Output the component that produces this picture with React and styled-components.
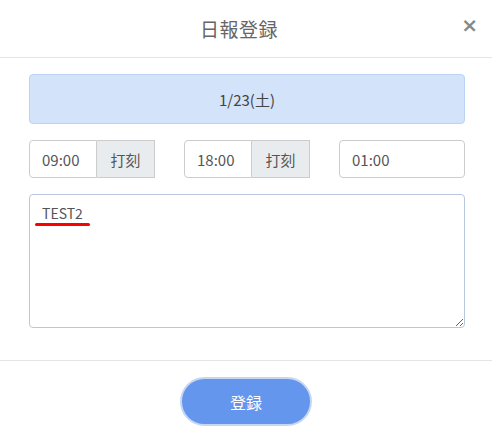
import React from "react";
import styled, { createGlobalStyle } from "styled-components";

const GlobalStyle = createGlobalStyle`
  html, body {
    margin: 0;
    padding: 0;
    background: #fff;
    font-family: "Noto Sans CJK JP", "Open Sans", sans-serif;
    color: #555;
  }
`;

const Modal = styled.div`
  width: 492px;
  height: 439px;
  display: flex;
  flex-direction: column;
  background: #fff;
`;

const Header = styled.header`
  height: 57px;
  border-bottom: 1px solid #e5e5e5;
  display: flex;
  align-items: center;
  justify-content: center;
  padding-right: 14px;
  position: relative;
`;

const Title = styled.h1`
  margin: 0;
  font-size: 19px;
  font-weight: 400;
  color: #666;
  letter-spacing: 0.5px;
`;

const Close = styled.button`
  position: absolute;
  right: 14px;
  top: 15px;
  border: none;
  background: none;
  font-family: "DejaVu Sans", sans-serif;
  font-size: 20px;
  font-weight: 700;
  color: #888;
  padding: 0;
  line-height: 1;
`;

const Body = styled.div`
  padding: 16px 27px 0 29px;
  display: flex;
  flex-direction: column;
  gap: 16px;
  height: 286px;
  border-bottom: 1px solid #e5e5e5;
`;

const DateBox = styled.div`
  height: 48px;
  border: 1px solid #bcd3f3;
  border-radius: 4px;
  background: #d2e3fa;
  display: flex;
  align-items: center;
  justify-content: center;
  font-size: 15px;
  color: #444;
`;

const TimeRow = styled.div`
  display: grid;
  grid-template-columns: repeat(3, 1fr);
  gap: 29px;
`;

const Group = styled.div`
  display: flex;
  height: 38px;
`;

const TimeInput = styled.div`
  flex: 1;
  border: 1px solid #ccc;
  border-radius: ${(p) => (p.$alone ? "4px" : "4px 0 0 4px")};
  display: flex;
  align-items: center;
  padding-left: 12px;
  font-size: 15px;
  color: #555;
  background: #fff;
`;

const StampButton = styled.button`
  width: 58px;
  border: 1px solid #ccc;
  border-left: none;
  background: #e9ecef;
  font-family: inherit;
  font-size: 15px;
  color: #555;
  padding: 0;
`;

const NoteWrap = styled.div`
  position: relative;
`;

const Note = styled.textarea`
  box-sizing: border-box;
  width: 100%;
  height: 134px;
  border: 1px solid #b7c8de;
  border-radius: 4px;
  padding: 8px 12px;
  font-family: inherit;
  font-size: 14px;
  color: #555;
  display: block;
  resize: vertical;
  outline: none;
`;

const SpellMark = styled.span`
  position: absolute;
  left: 6px;
  top: 29px;
  width: 55px;
  height: 3px;
  border-radius: 2px;
  background: #f00;
`;

const Footer = styled.footer`
  flex: 1;
  display: flex;
  justify-content: center;
  padding-top: 16px;
`;

const Submit = styled.button`
  width: 132px;
  height: 49px;
  border-radius: 25px;
  border: 2px solid #c6d7f2;
  background: #6496ee;
  color: #fff;
  font-family: inherit;
  font-size: 16px;
`;

export default function App() {
  return (
    <>
      <GlobalStyle />
      <Modal>
        <Header>
          <Title>日報登録</Title>
          <Close>×</Close>
        </Header>
        <Body>
          <DateBox>1/23(土)</DateBox>
          <TimeRow>
            <Group>
              <TimeInput>09:00</TimeInput>
              <StampButton>打刻</StampButton>
            </Group>
            <Group>
              <TimeInput>18:00</TimeInput>
              <StampButton>打刻</StampButton>
            </Group>
            <Group>
              <TimeInput $alone>01:00</TimeInput>
            </Group>
          </TimeRow>
          <NoteWrap>
            <Note defaultValue="TEST2" spellCheck={false} />
            <SpellMark />
          </NoteWrap>
        </Body>
        <Footer>
          <Submit>登録</Submit>
        </Footer>
      </Modal>
    </>
  );
}
